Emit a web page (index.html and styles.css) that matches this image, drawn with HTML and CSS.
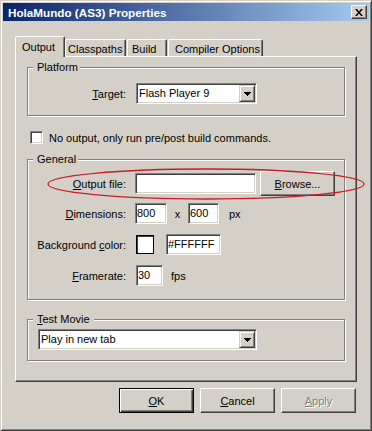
FILE: index.html
```html
<!DOCTYPE html>
<html lang="en">
<head>
  <meta charset="UTF-8">
  <title>HolaMundo (AS3) Properties</title>
  <link rel="stylesheet" href="styles.css">
</head>
<body>

<div class="window">
  <div class="titlebar">
    <span class="title">HolaMundo (AS3) Properties</span>
    <div class="close">
      <svg width="8" height="7" viewBox="0 0 8 7"><path d="M0 0h2l2 2.5L6 0h2L5 3.5 8 7H6L4 4.5 2 7H0l3-3.5z"/></svg>
    </div>
  </div>

  <div class="tabs">
    <div class="tab active t-output">Output</div>
    <div class="tab t-class">Classpaths</div>
    <div class="tab t-build">Build</div>
    <div class="tab t-comp">Compiler Options</div>
  </div>

  <div class="panel">
    <div class="group platform">
      <div class="legend">Platform</div>
      <div class="row">
        <span class="lbl"><u>T</u>arget:</span>
        <div class="select w-target">
          <span class="val">Flash Player 9</span>
          <span class="arrow"><svg width="7" height="4" viewBox="0 0 7 4"><path d="M0 0h7v1h-1v1h-1v1h-1v1h-1v-1h-1v-1h-1v-1h-1z"/></svg></span>
        </div>
      </div>
    </div>

    <div class="check">
      <span class="cbox"></span>
      <span class="ctext">No output, only run pre/post build commands.</span>
    </div>

    <div class="group general">
      <div class="legend">General</div>
      <div class="row grow r1">
        <span class="lbl"><u>O</u>utput file:</span>
        <div class="field w-file"></div>
        <div class="btn browse"><span><u>B</u>rowse...</span></div>
      </div>
      <div class="row grow r2">
        <span class="lbl"><u>D</u>imensions:</span>
        <div class="field w-dim">800</div>
        <span class="times">x</span>
        <div class="field w-dim2">600</div>
        <span class="unit">px</span>
      </div>
      <div class="row grow r3">
        <span class="lbl">Background <u>c</u>olor:</span>
        <div class="swatch"></div>
        <div class="field w-color">#FFFFFF</div>
      </div>
      <div class="row grow r3">
        <span class="lbl"><u>F</u>ramerate:</span>
        <div class="field w-fps">30</div>
        <span class="unit fps">fps</span>
      </div>
      <svg class="mark" width="330" height="44" viewBox="0 0 330 44">
        <ellipse cx="163" cy="20" rx="158" ry="15" fill="none" stroke="#cc1c26" stroke-width="1.3"/>
      </svg>
    </div>

    <div class="group test">
      <div class="legend legend-wide"><u>T</u>est Movie</div>
      <div class="select w-play">
        <span class="val">Play in new tab</span>
        <span class="arrow"><svg width="7" height="4" viewBox="0 0 7 4"><path d="M0 0h7v1h-1v1h-1v1h-1v1h-1v-1h-1v-1h-1v-1h-1z"/></svg></span>
      </div>
    </div>
  </div>

  <div class="buttons">
    <div class="btn default"><span><u>O</u>K</span></div>
    <div class="btn"><span><u>C</u>ancel</span></div>
    <div class="btn disabled"><span><u>A</u>pply</span></div>
  </div>
</div>

</body>
</html>
```

FILE: styles.css
```css
body {
  margin: 0;
  background: #d4d0c8;
  font-family: "Liberation Sans", Arial, sans-serif;
  font-size: 11px;
  color: #000;
}

.window {
  width: 372px;
  height: 431px;
  box-sizing: border-box;
  border: 1px solid;
  border-color: #d4d0c8 #404040 #404040 #d4d0c8;
  box-shadow: inset 1px 1px #fff, inset -1px -1px #808080;
  padding: 2px;
  background: #d4d0c8;
}

/* title bar */
.titlebar {
  height: 18px;
  display: flex;
  align-items: center;
  justify-content: space-between;
  padding: 0 2px 0 5px;
  background: linear-gradient(to right, #0a246a, #a6caf0);
}

.title {
  color: #fff;
  font-weight: bold;
  font-size: 11.7px;
}

.close {
  width: 16px;
  height: 14px;
  box-sizing: border-box;
  border: 1px solid;
  border-color: #fff #404040 #404040 #fff;
  box-shadow: inset -1px -1px #808080;
  background: #d4d0c8;
  display: flex;
  align-items: center;
  justify-content: center;
}

.close svg {
  display: block;
}

/* tabs */
.tabs {
  display: flex;
  align-items: flex-end;
  height: 20px;
  margin: 15px 0 0 12px;
}

.tab {
  box-sizing: border-box;
  height: 17px;
  border: 1px solid;
  border-bottom: none;
  border-color: #fff #404040 transparent #fff;
  box-shadow: inset -1px 0 #808080;
  border-radius: 2px 2px 0 0;
  line-height: 13px;
  padding-top: 3px;
  white-space: nowrap;
}

.tab.active {
  height: 21px;
  margin-bottom: -1px;
  padding-top: 4px;
  position: relative;
  z-index: 1;
  background: #d4d0c8;
}

.t-output { width: 50px; padding-left: 6px; }
.t-class { width: 61px; padding-left: 2px; }
.t-build { width: 40px; padding-left: 4px; margin-left: 1px; }
.t-comp { width: 95px; padding-left: 6px; margin-left: 1px; }

/* panel */
.panel {
  width: 342px;
  height: 326px;
  box-sizing: border-box;
  margin-left: 12px;
  border: 1px solid;
  border-color: #fff #404040 #404040 #fff;
  box-shadow: inset -1px -1px #808080;
  padding-top: 10px;
}

.group {
  position: relative;
  width: 318px;
  margin-left: 11px;
  box-sizing: border-box;
  border: 1px solid #808080;
  box-shadow: inset 1px 1px #fff, 1px 1px #fff;
}

.legend {
  display: table;
  margin: -7px 0 0 5px;
  padding: 0 2px 0 4px;
  line-height: 13px;
  background: #d4d0c8;
}

.legend-wide {
  padding-right: 4px;
}

.platform { height: 49px; }
.general { height: 141px; margin-top: 15px; }
.test { height: 42px; margin-top: 19px; }

.row {
  display: flex;
  align-items: center;
}

.platform .row { margin-top: 9px; }

.grow { height: 25px; }
.r1 { margin-top: 5px; }
.r2 { margin-top: 5px; }
.r3 { margin-top: 6px; }

.lbl {
  width: 98px;
  margin-right: 10px;
  text-align: right;
  white-space: nowrap;
}

/* sunken controls */
.select, .field, .cbox {
  box-sizing: border-box;
  border: 1px solid;
  border-color: #808080 #fff #fff #808080;
  box-shadow: inset 1px 1px #404040, inset -1px -1px #d4d0c8;
  background: #fff;
}

.select {
  height: 21px;
  padding: 1px;
  display: flex;
}

.select .val {
  flex: 1;
  padding-left: 1px;
  line-height: 17px;
}

.w-target { width: 121px; }
.w-play { width: 219px; margin: 3px 0 0 10px; }

.arrow {
  width: 16px;
  height: 17px;
  box-sizing: border-box;
  border: 1px solid;
  border-color: #d4d0c8 #404040 #404040 #d4d0c8;
  box-shadow: inset 1px 1px #fff, inset -1px -1px #808080;
  background: #d4d0c8;
  display: flex;
  align-items: center;
  justify-content: center;
}

.arrow svg {
  display: block;
}

.field {
  height: 21px;
  padding: 0 1px;
  line-height: 19px;
}

.w-file { width: 121px; margin-left: -1px; }
.w-dim { width: 32px; margin-left: -1px; }
.w-dim2 { width: 31px; }
.w-color { width: 55px; margin-left: 12px; }
.w-fps { width: 27px; }

.times {
  width: 21px;
  text-align: center;
}

.unit { margin-left: 10px; }
.unit.fps { margin-left: 8px; }

.swatch {
  width: 18px;
  height: 19px;
  box-sizing: border-box;
  border: 1px solid #000;
  box-shadow: inset 1px 1px #404040;
  background: #fff;
}

/* checkbox */
.check {
  display: flex;
  align-items: center;
  margin: 15px 0 0 14px;
  height: 13px;
}

.cbox {
  width: 13px;
  height: 13px;
  margin-right: 6px;
}

.ctext {
  padding-top: 1px;
}

/* buttons */
.btn {
  width: 75px;
  height: 25px;
  box-sizing: border-box;
  border: 1px solid;
  border-color: #fff #404040 #404040 #fff;
  box-shadow: inset -1px -1px #808080;
  background: #d4d0c8;
  display: flex;
  align-items: center;
  justify-content: center;
}

.browse {
  margin-left: 4px;
}

.btn.default {
  border-color: #000;
  box-shadow: inset 1px 1px #fff, inset -1px -1px #404040, inset -2px -2px #808080;
}

.btn.disabled {
  color: #808080;
  text-shadow: 1px 1px 0 #fff;
}

.buttons {
  display: flex;
  justify-content: flex-end;
  gap: 6px;
  margin-top: 6px;
  padding-right: 13px;
}

.mark {
  position: absolute;
  left: 15px;
  top: 4px;
  pointer-events: none;
}
```
